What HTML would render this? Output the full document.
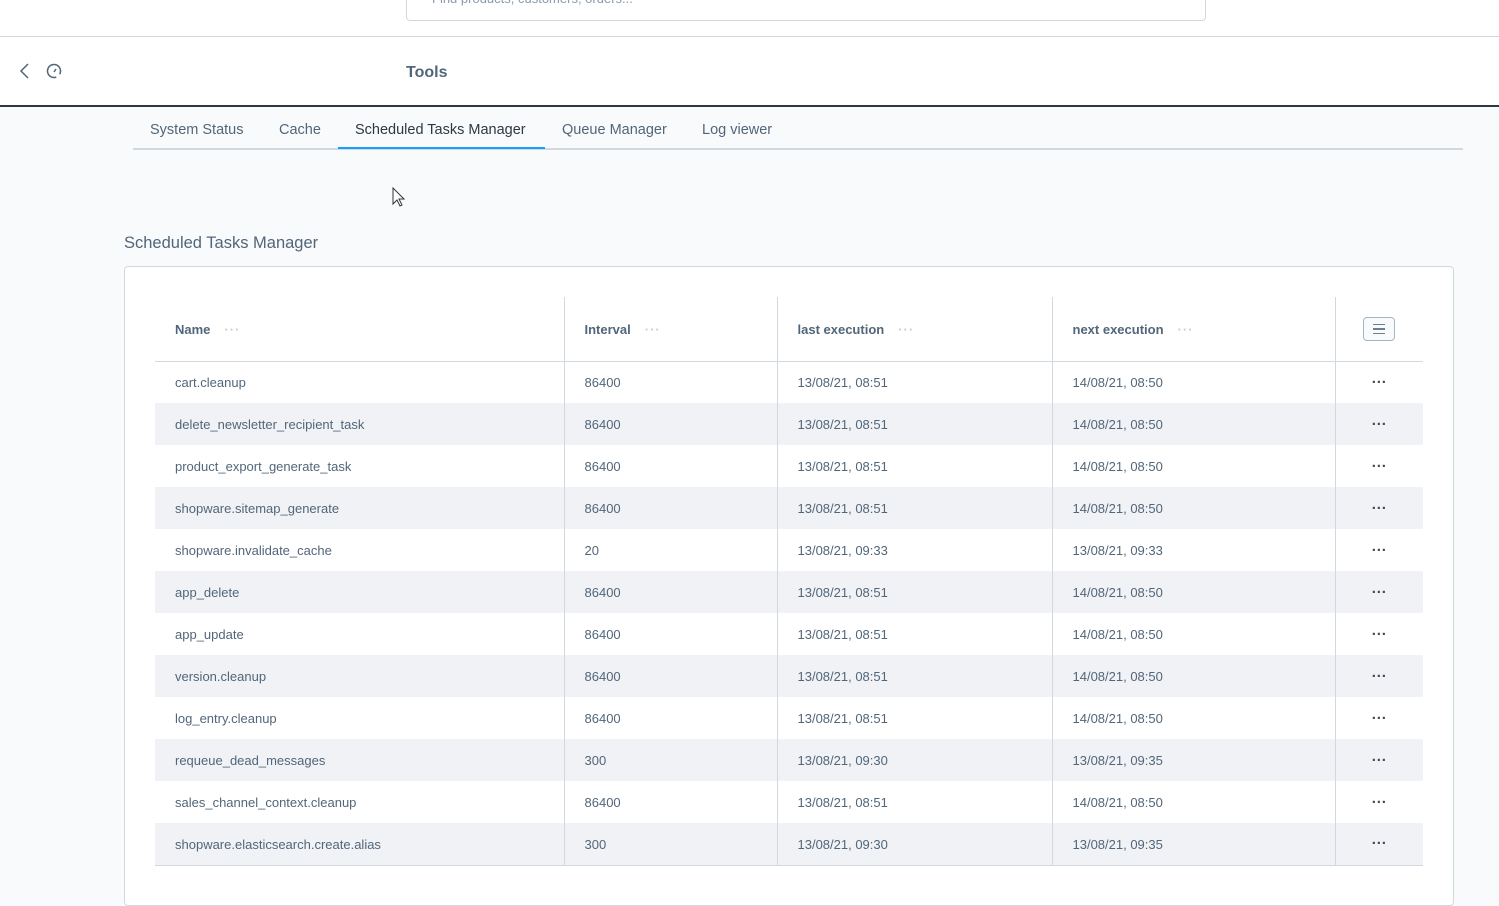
<!DOCTYPE html>
<html><head><meta charset="utf-8"><style>
*{box-sizing:border-box;margin:0;padding:0}
body{width:1499px;height:880px;overflow:hidden;background:#f9fafb;font-family:"Liberation Sans",sans-serif;color:#52667a;position:relative}
.hdr{position:absolute;left:0;top:0;width:1499px;height:107px;background:#fff;border-bottom:2px solid #2c3945}
.search{position:absolute;left:406px;top:-12px;width:800px;height:33px;border:1px solid #d1d9e0;border-radius:4px;background:#fff;font-size:13px;color:#8a9aab;padding:0 25px;line-height:20px;overflow:hidden}
.hl{position:absolute;left:0;top:36px;width:1499px;height:1px;background:#d1d9e0}
.tools{position:absolute;left:406px;top:64px;font-size:16px;font-weight:bold;color:#52667a}
.tabs{position:absolute;left:133px;top:110px;width:1330px;height:40px;border-bottom:2px solid #d1d9e0}
.tab{position:absolute;top:12px;font-size:14.5px;color:#52667a}
.ul{position:absolute;left:205px;top:37px;width:207px;height:2px;background:#189eff}
h2{position:absolute;left:124px;top:234px;font-size:16.5px;font-weight:normal;color:#52667a}
.card{position:absolute;left:124px;top:266px;width:1330px;height:640px;background:#fff;border:1px solid #d1d9e0;border-radius:4px}
table{position:absolute;left:155px;top:297px;width:1268px;border-collapse:collapse;font-size:13px}
th{height:64px;text-align:left;font-weight:bold;color:#52667a;padding-left:20px;border-bottom:1px solid #d1d9e0;padding-top:1px}
td{height:42px;padding-left:20px;color:#52667a;padding-top:1px}
th,td{border-left:1px solid #d1d9e0}
th:first-child,td:first-child{border-left:none}
tbody tr:nth-child(even) td{background:#f0f2f5}
.dd{color:#c5ced7;margin-left:14px;letter-spacing:1px;font-weight:bold}
.act{text-align:center;padding:0;font-weight:bold;font-size:15px;letter-spacing:0;color:#3d4b5a}
.btn{display:inline-block;width:32px;height:24px;border:1px solid #a8b6c4;border-radius:4px;background:#f9fafb;position:relative;vertical-align:middle}
.btn i{position:absolute;left:9px;width:12px;height:1.5px;background:#6c7e90}
tbody tr:last-child td{border-bottom:1px solid #d1d9e0}
</style></head><body>
<div class="hdr">
<div class="search">Find products, customers, orders...</div>
<div class="hl"></div>
<svg style="position:absolute;left:18px;top:62px" width="14" height="18" viewBox="0 0 14 18"><path d="M10 2L3 9l7 7" fill="none" stroke="#52667a" stroke-width="1.5"/></svg>
<svg style="position:absolute;left:45px;top:62px" width="18" height="18" viewBox="0 0 18 18"><circle cx="9" cy="9" r="6.5" fill="none" stroke="#52667a" stroke-width="1.5" stroke-dasharray="36 5" transform="rotate(70 9 9)"/><path d="M9 10l2-3" stroke="#52667a" stroke-width="1.5"/></svg>
<div class="tools">Tools</div>
</div>
<div class="tabs">
<span class="tab" style="left:17px">System Status</span>
<span class="tab" style="left:146px">Cache</span>
<span class="tab" style="left:222px;color:#2c3945">Scheduled Tasks Manager</span>
<span class="tab" style="left:429px">Queue Manager</span>
<span class="tab" style="left:569px">Log viewer</span>
<div class="ul"></div>
</div>
<svg style="position:absolute;left:392px;top:187px" width="14" height="22" viewBox="0 0 14 22"><path d="M1 1v16l4-4 3 6 2-1-3-6h5z" fill="#fff" stroke="#333" stroke-width="1"/></svg>
<h2>Scheduled Tasks Manager</h2>
<div class="card"></div>
<table>
<thead><tr>
<th style="width:409px">Name<span class="dd">···</span></th>
<th style="width:213px">Interval<span class="dd">···</span></th>
<th style="width:275px">last execution<span class="dd">···</span></th>
<th style="width:283px">next execution<span class="dd">···</span></th>
<th style="padding:0;text-align:center"><span class="btn"><i style="top:6px"></i><i style="top:10.5px"></i><i style="top:15px"></i></span></th>
</tr></thead>
<tbody>
<tr><td>cart.cleanup</td><td>86400</td><td>13/08/21, 08:51</td><td>14/08/21, 08:50</td><td class="act">···</td></tr>
<tr><td>delete_newsletter_recipient_task</td><td>86400</td><td>13/08/21, 08:51</td><td>14/08/21, 08:50</td><td class="act">···</td></tr>
<tr><td>product_export_generate_task</td><td>86400</td><td>13/08/21, 08:51</td><td>14/08/21, 08:50</td><td class="act">···</td></tr>
<tr><td>shopware.sitemap_generate</td><td>86400</td><td>13/08/21, 08:51</td><td>14/08/21, 08:50</td><td class="act">···</td></tr>
<tr><td>shopware.invalidate_cache</td><td>20</td><td>13/08/21, 09:33</td><td>13/08/21, 09:33</td><td class="act">···</td></tr>
<tr><td>app_delete</td><td>86400</td><td>13/08/21, 08:51</td><td>14/08/21, 08:50</td><td class="act">···</td></tr>
<tr><td>app_update</td><td>86400</td><td>13/08/21, 08:51</td><td>14/08/21, 08:50</td><td class="act">···</td></tr>
<tr><td>version.cleanup</td><td>86400</td><td>13/08/21, 08:51</td><td>14/08/21, 08:50</td><td class="act">···</td></tr>
<tr><td>log_entry.cleanup</td><td>86400</td><td>13/08/21, 08:51</td><td>14/08/21, 08:50</td><td class="act">···</td></tr>
<tr><td>requeue_dead_messages</td><td>300</td><td>13/08/21, 09:30</td><td>13/08/21, 09:35</td><td class="act">···</td></tr>
<tr><td>sales_channel_context.cleanup</td><td>86400</td><td>13/08/21, 08:51</td><td>14/08/21, 08:50</td><td class="act">···</td></tr>
<tr><td>shopware.elasticsearch.create.alias</td><td>300</td><td>13/08/21, 09:30</td><td>13/08/21, 09:35</td><td class="act">···</td></tr>
</tbody></table>
</body></html>
